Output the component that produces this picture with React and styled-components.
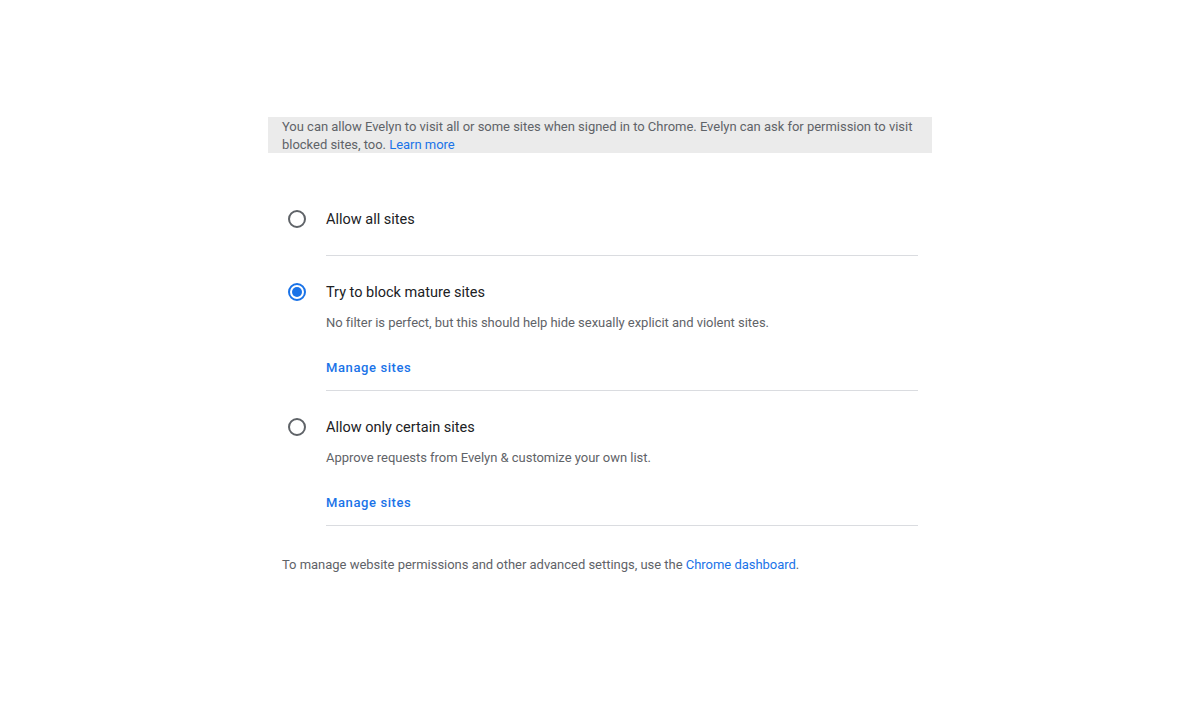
import React from "react";
import styled, { createGlobalStyle } from "styled-components";

const GlobalStyle = createGlobalStyle`
  html, body {
    margin: 0;
    padding: 0;
    background: #ffffff;
    font-family: Roboto, "Noto Sans", Arial, sans-serif;
    -webkit-font-smoothing: antialiased;
  }
`;

const Page = styled.div`
  width: 1200px;
  height: 702px;
  padding-top: 117px;
  box-sizing: border-box;
`;

const Panel = styled.section`
  width: 664px;
  margin-left: 268px;
`;

const Banner = styled.div`
  background: #ebebeb;
  padding: 1px 14px 0;
  height: 36px;
  box-sizing: border-box;
  font-size: 13px;
  line-height: 18px;
  letter-spacing: -0.025px;
  color: #5f6368;
`;

const Link = styled.a`
  color: #1a73e8;
  text-decoration: none;
  cursor: pointer;
`;

const Options = styled.div`
  margin-top: 56px;
  padding-left: 20px;
  width: 630px;
`;

const Option = styled.label`
  display: grid;
  grid-template-columns: 38px 1fr;
  padding-top: ${(p) => (p.$first ? "0" : "26px")};
  cursor: pointer;
`;

const RadioCell = styled.div`
  height: 20px;
  display: flex;
  align-items: center;
`;

const Radio = styled.span`
  width: 18px;
  height: 18px;
  box-sizing: border-box;
  border-radius: 50%;
  border: 2px solid ${(p) => (p.$checked ? "#1a73e8" : "#5f6368")};
  display: flex;
  align-items: center;
  justify-content: center;
  &::after {
    content: "";
    display: ${(p) => (p.$checked ? "block" : "none")};
    width: 10px;
    height: 10px;
    border-radius: 50%;
    background: #1a73e8;
  }
`;

const Body = styled.div`
  border-bottom: 1px solid #dadce0;
  padding-bottom: ${(p) => (p.$compact ? "13px" : "24px")};
`;

const Title = styled.div`
  font-size: 14.5px;
  line-height: 22px;
  color: #202124;
`;

const Desc = styled.div`
  margin-top: 10px;
  font-size: 13px;
  line-height: 18px;
  letter-spacing: -0.03px;
  color: #5f6368;
`;

const Manage = styled.a`
  display: block;
  margin-top: 27px;
  font-size: 13px;
  line-height: 18px;
  font-weight: 500;
  letter-spacing: 0.6px;
  color: #1a73e8;
  text-decoration: none;
`;

const Footer = styled.p`
  margin: 30px 0 0 14px;
  font-size: 13px;
  line-height: 18px;
  letter-spacing: -0.025px;
  color: #5f6368;
`;

const options = [
  { title: "Allow all sites" },
  {
    title: "Try to block mature sites",
    desc: "No filter is perfect, but this should help hide sexually explicit and violent sites.",
    checked: true,
  },
  {
    title: "Allow only certain sites",
    desc: "Approve requests from Evelyn & customize your own list.",
  },
];

export default function App() {
  return (
    <Page>
      <GlobalStyle />
      <Panel>
        <Banner>
          You can allow Evelyn to visit all or some sites when signed in to
          Chrome. Evelyn can ask for permission to visit blocked sites, too.{" "}
          <Link>Learn more</Link>
        </Banner>
        <Options>
          {options.map((o, i) => (
            <Option key={o.title} $first={i === 0}>
              <RadioCell>
                <Radio $checked={o.checked} />
              </RadioCell>
              <Body $compact={!!o.desc}>
                <Title>{o.title}</Title>
                {o.desc && (
                  <>
                    <Desc>{o.desc}</Desc>
                    <Manage>Manage sites</Manage>
                  </>
                )}
              </Body>
            </Option>
          ))}
        </Options>
        <Footer>
          To manage website permissions and other advanced settings, use the{" "}
          <Link>Chrome dashboard</Link>.
        </Footer>
      </Panel>
    </Page>
  );
}
